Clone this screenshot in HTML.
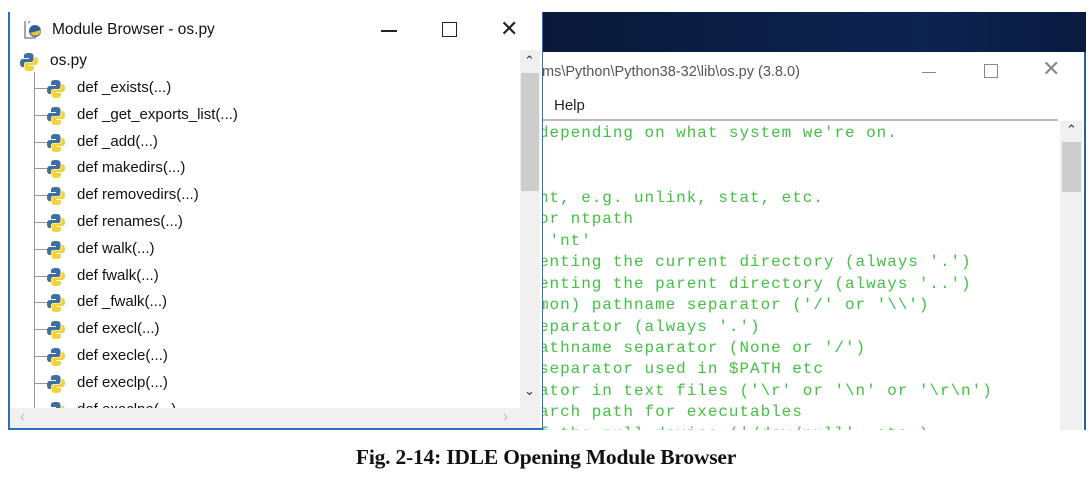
<!DOCTYPE html>
<html><head><meta charset="utf-8"><style>
body{margin:0;width:1092px;height:482px;background:#fff;position:relative;overflow:hidden;font-family:"Liberation Sans",sans-serif}
.a{position:absolute}
.row{position:absolute;left:77px;font-size:15px;color:#111;line-height:18px}
.code{position:absolute;left:0;font-family:"Liberation Mono",monospace;font-size:16px;letter-spacing:0.95px;color:#44c144;white-space:pre;line-height:20px}
</style></head><body>
<svg width="0" height="0" style="position:absolute"><defs>
<g id="py"><path d="M9 1 C5 1 4 2 4 4 V6 H9 V7 H2.5 C1 7 0 8.5 0 11 C0 13.5 1 15 2.5 15 H4 V12.5 C4 11 5 10 6.5 10 H11 C12.5 10 13.5 9 13.5 7.5 V4 C13.5 2 12 1 9 1Z" fill="#3d6fa3"/><path d="M9 19 C13 19 14 18 14 16 V14 H9 V13 H15.5 C17 13 18 11.5 18 9 C18 6.5 17 5 15.5 5 H14.5 V7.5 C14.5 9 13.5 10.5 12 10.5 H7 C5.5 10.5 4.5 11.5 4.5 13 V16 C4.5 18 6 19 9 19Z" fill="#f5d23a"/></g>
</defs></svg>

<div class="a" style="left:542px;top:12px;width:544px;height:42px;background:linear-gradient(90deg,#0a1838,#0d2350 70%,#0a1a40)"></div>
<div class="a" style="left:542px;top:52px;width:542px;height:378px;background:#fff;border-right:2px solid #2a5fa8"></div>
<div class="a" style="left:542px;top:64px;font-size:14.5px;color:#555">ms\Python\Python38-32\lib\os.py (3.8.0)</div>
<div class="a" style="left:922px;top:72px;width:14px;height:1px;background:#888"></div>
<div class="a" style="left:984px;top:64px;width:12px;height:12px;border:1px solid #888"></div>
<div class="a" style="left:1042px;top:56px;font-size:22px;color:#888;font-weight:300">✕</div>
<div class="a" style="left:554px;top:97px;font-size:15px;color:#222">Help</div>
<div class="a" style="left:542px;top:119px;width:516px;height:2px;background:#bbb"></div>
<div class="a" style="left:542px;top:121px;width:516px;height:309px;overflow:hidden">
<div class="code" style="top:2px;left:-3px">depending on what system we're on.</div>
<div class="code" style="top:67px;left:-3px">nt, e.g. unlink, stat, etc.</div>
<div class="code" style="top:88px;left:-3px">or ntpath</div>
<div class="code" style="top:110px;left:-3px"> 'nt'</div>
<div class="code" style="top:131px;left:-3px">enting the current directory (always '.')</div>
<div class="code" style="top:153px;left:-3px">enting the parent directory (always '..')</div>
<div class="code" style="top:174px;left:-3px">mon) pathname separator ('/' or '\\')</div>
<div class="code" style="top:196px;left:-3px">eparator (always '.')</div>
<div class="code" style="top:217px;left:-3px">athname separator (None or '/')</div>
<div class="code" style="top:238px;left:-3px">separator used in $PATH etc</div>
<div class="code" style="top:260px;left:-3px">ator in text files ('\r' or '\n' or '\r\n')</div>
<div class="code" style="top:281px;left:-3px">arch path for executables</div>
<div class="code" style="top:303px;left:-3px">f the null device ('/dev/null', etc.)</div>
</div>
<div class="a" style="left:1060px;top:121px;width:22px;height:309px;background:#f0f0f0"></div>
<div class="a" style="left:1062px;top:142px;width:19px;height:50px;background:#cdcdcd"></div>
<div class="a" style="left:1066px;top:122px;font-size:13px;color:#333">&#8963;</div>

<div class="a" style="left:8px;top:12px;width:532px;height:416px;background:#fff;border-left:2px solid #2a6fc0;border-right:1px solid #2a6fc0;border-bottom:2px solid #2a6fc0"></div>
<svg class="a" style="left:22px;top:19px" width="22" height="22"><path d="M3 2 V19 H14" stroke="#777" fill="none" stroke-width="1.3"/><path d="M6 4 L8 2" stroke="#777"/><circle cx="13" cy="12" r="6" fill="#2d5c9a"/><path d="M8 14 A6 6 0 0 0 19 11 Z" fill="#e8c830"/></svg>
<div class="a" style="left:52px;top:21px;font-size:15.5px;color:#111">Module Browser - os.py</div>
<div class="a" style="left:381px;top:30px;width:16px;height:1.5px;background:#222"></div>
<div class="a" style="left:442px;top:22px;width:13px;height:13px;border:1.5px solid #222"></div>
<div class="a" style="left:500px;top:16px;font-size:22px;color:#222">✕</div>

<svg class="a" style="left:20px;top:52px" width="20" height="20"><use href="#py"/></svg>
<div class="a" style="left:50px;top:52px;font-size:15.5px;color:#111">os.py</div>
<div class="a" style="left:34px;top:72px;width:1px;height:336px;background:#999"></div>

<div id="rows"></div>
<script>
var n=["def _exists(...)","def _get_exports_list(...)","def _add(...)","def makedirs(...)","def removedirs(...)","def renames(...)","def walk(...)","def fwalk(...)","def _fwalk(...)","def execl(...)","def execle(...)","def execlp(...)","def execlpe(...)"];
var h="";
for(var i=0;i<n.length;i++){var y=88+i*26.8;
h+='<div class="a" style="left:34px;top:'+Math.round(y)+'px;width:14px;height:1px;background:#999"></div>';
h+='<svg class="a" style="left:47px;top:'+Math.round(y-9)+'px" width="20" height="20"><use href="#py"/></svg>';
h+='<div class="row" style="top:'+Math.round(y-9)+'px">'+n[i]+'</div>';}
document.getElementById("rows").outerHTML=h;
</script>
<div class="a" style="left:10px;top:408px;width:510px;height:20px;background:#f0f0f0"></div>
<div class="a" style="left:20px;top:408px;font-size:15px;color:#bbb">&lsaquo;</div>
<div class="a" style="left:503px;top:408px;font-size:15px;color:#bbb">&rsaquo;</div>
<div class="a" style="left:520px;top:50px;width:20px;height:378px;background:#f0f0f0"></div>
<div class="a" style="left:521px;top:73px;width:18px;height:118px;background:#cdcdcd"></div>
<div class="a" style="left:524px;top:53px;font-size:13px;color:#333">&#8963;</div>
<div class="a" style="left:524px;top:383px;font-size:13px;color:#333">&#8964;</div>

<div class="a" style="left:0;top:445px;width:1092px;text-align:center;font-family:'Liberation Serif',serif;font-size:21.5px;font-weight:bold;color:#111;letter-spacing:-0.2px">Fig. 2-14: IDLE Opening Module Browser</div>
</body></html>
